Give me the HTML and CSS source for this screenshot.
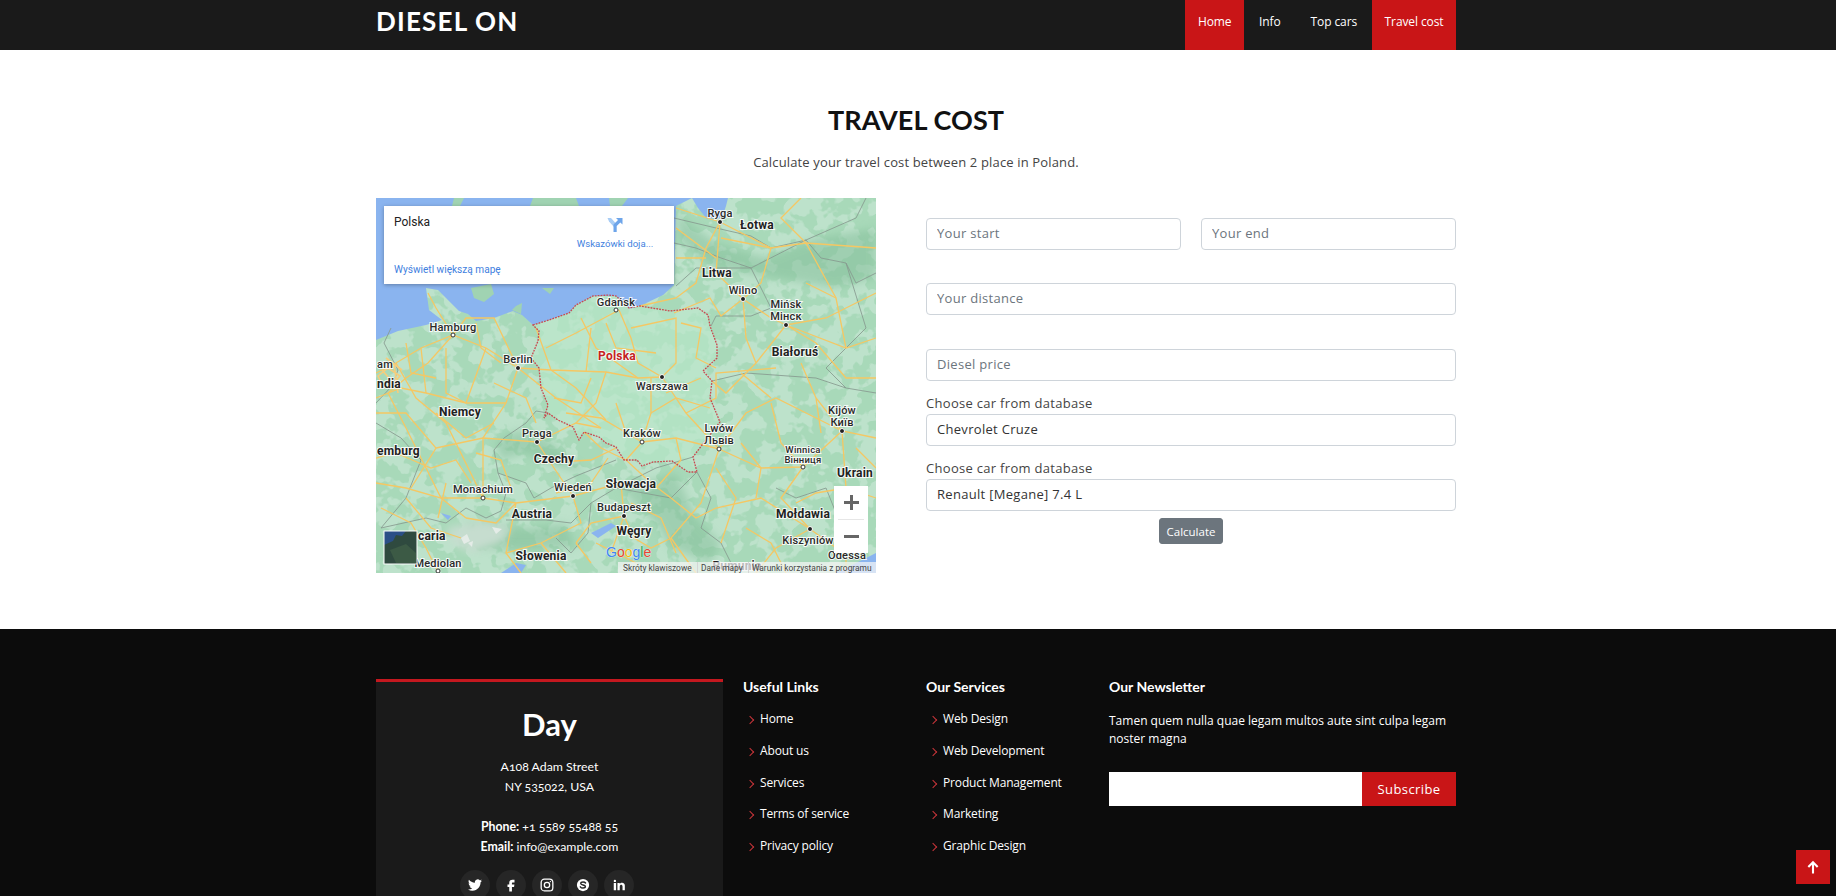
FILE: index.html
```html
<!DOCTYPE html>
<html lang="en">
<head>
  <meta charset="UTF-8">
  <title>Diesel On</title>
  <link rel="stylesheet" href="styles.css">
</head>
<body>

  <header class="topbar">
    <div class="wrap topbar-inner">
      <a class="logo" href="#">DIESEL ON</a>
      <nav class="nav">
        <a class="nav-link active" href="#">Home</a>
        <a class="nav-link" href="#">Info</a>
        <a class="nav-link" href="#">Top cars</a>
        <a class="nav-link active" href="#">Travel cost</a>
      </nav>
    </div>
  </header>

  <section class="travel">
    <div class="wrap">
      <h2 class="section-title">TRAVEL COST</h2>
      <p class="section-sub">Calculate your travel cost between 2 place in Poland.</p>

      <div class="travel-row">
        <div class="map">
          <svg class="map-svg" viewBox="0 0 500 375" width="500" height="375">
            <defs>
              <filter id="woods" x="0" y="0" width="100%" height="100%">
                <feTurbulence type="fractalNoise" baseFrequency=".06" numOctaves="3" seed="11"/>
                <feColorMatrix values="0 0 0 0 .51  0 0 0 0 .76  0 0 0 0 .60  14 0 0 0 -6.6"/>
              </filter>
              <filter id="soft" x="-10%" y="-10%" width="120%" height="120%">
                <feGaussianBlur stdDeviation="4"/>
              </filter>
            </defs>
            <g class="map-geo">
              <rect width="500" height="375" fill="#a8d9b9"/>
              <rect width="500" height="375" filter="url(#woods)"/>
              <!-- mountains and big forest areas -->
              <g fill="#82bd98" filter="url(#soft)" opacity=".5">
                <path d="M245 290L285 280L300 275L320 320L345 345L335 365L295 350L280 325L258 305Z"/>
                <path d="M125 262L150 255L180 268L210 275L195 262L170 240L140 232L120 245Z"/>
                <path d="M300 15L340 45L390 60L440 40L500 30V80L460 90L400 80L340 70L305 45Z"/>
                <path d="M90 325L150 330L190 325L200 350L150 352L100 350Z"/>
              </g>
              <!-- sea -->
              <path fill="#8ab4ef" d="M0 0H352L350 8L346 20L331 21L322 10L316 0L300 8L298 87L287 97L264 108L254 111L240 98L217 98L200 107L193 115L173 122L157 127L146 117L137 113L118 120L100 123L92 116L83 113L70 100L62 92L50 90L53 112L66 122L50 127L22 133L0 142Z"/>
              <path fill="#a0d3b2" d="M78 0H88L84 8H76ZM157 0H200L203 8H154ZM233 0H252L246 8H234ZM95 90L115 86L118 96L108 104L98 100ZM166 90L178 90L174 96ZM140 108L146 105L145 116L136 112Z"/>
              <!-- poland -->
              <path fill="#b9e7ca" fill-opacity=".6" d="M157 127L173 122L193 115L200 107L217 98L240 98L253 110L264 108L294 113L322 110L332 117L334 128L341 147L341 160L327 173L336 183L334 200L344 224L326 247L317 259L321 274L312 274L296 263L277 264L266 268L261 262L248 262L240 249L230 245L223 239L208 234L203 242L197 229L182 222L172 215L168 220L172 207L165 190L163 170L155 160L162 143L163 133Z"/>
              <!-- alps -->
              <path fill="#c6ddcf" filter="url(#soft)" d="M70 330L110 322L135 330L125 345L95 355L75 345Z"/>
              <path fill="#e4ece7" d="M85 340L91 336L94 343L88 346ZM116 329L126 331L120 336ZM92 345L97 343L96 349Z"/>
              <path fill="#8ab4ef" d="M125 375L140 365L150 367L145 375ZM215 335L235 325L240 328L222 340ZM460 375L500 355V375ZM65 315L75 318L72 322Z"/>
              <!-- country borders -->
              <g fill="none" stroke="#86998f" stroke-width=".85">
                <path d="M15 130L8 145L22 172L16 188L0 205M0 225L25 240L45 262L30 300L5 330M5 330L50 320L70 325L90 310L110 320L125 313L130 295L122 275L118 252L128 240L150 225L160 213L172 215"/>
                <path d="M122 275L150 285L158 300L175 290L200 278L240 262M130 322L170 322L195 325L215 305L240 290L280 270L317 259M215 305L212 335L195 355L180 340M240 290L295 300L321 274M321 274L335 300L325 330L345 345L360 375"/>
                <path d="M298 20L340 30L375 38L395 50L430 42L480 20L490 0M298 45L320 50L345 60L375 70L430 42M300 88L320 70L375 70L395 110L375 118L340 118L335 128M430 42L445 60L470 65L480 85L500 75M470 65L490 130L450 170L470 190L500 195M336 183L370 175L440 180L470 190M400 290L420 300L450 290L470 340L480 355"/>
              </g>
              <!-- roads -->
              <g fill="none" stroke="#f5c763" stroke-width="1.3">
                <path d="M0 175L20 165L45 150L77 137L110 150L142 170M77 137L60 110L52 95M77 137L90 120L118 120L142 170M77 137L52 165L30 180L12 195M142 170L130 205L107 240L107 300M20 165L40 200L70 225L107 300"/>
                <path d="M0 200L25 190L50 195L90 205L130 205M0 215L30 215L60 250L35 290M12 195L30 230L50 270L65 300L90 320M60 250L107 240L161 244M107 300L65 300L30 290L0 285M107 300L140 305L197 298M161 244L178 270L197 298M161 244L200 225L225 230"/>
                <path d="M142 170L175 172L230 174L262 180L286 179M286 179L262 165L255 140L243 112M275 180L275 215L266 244M286 179L310 215L343 251M266 244L300 240L343 251M190 215L225 220L266 244M142 170L180 200L225 230M175 172L160 130M175 172L200 190L230 222"/>
                <path d="M205 120L220 150L262 180M255 130L300 120L300 165L286 179M243 112L200 135L170 150M210 174L215 130M230 174L220 205L200 225M275 215L300 200L334 210M310 215L340 200L340 175L400 170M266 244L250 262L275 285M300 240L305 262L280 290"/>
                <path d="M197 298L245 285L248 318L235 355M248 318L258 340L275 350L295 340L325 305L343 251M197 298L205 325L165 345L130 355M248 318L215 325L200 345M275 285L295 300L320 320L340 310L385 300L434 331M343 251L385 270L427 269L466 233"/>
                <path d="M343 251L370 215L400 200L466 233L500 240M427 269L405 300L434 331L470 357L470 375M466 233L470 290L500 300M434 331L400 350L380 375M344 24L330 50L320 85L300 100L264 108M344 24L395 50L430 45L500 50M344 24L300 10M344 24L340 75L367 101"/>
                <path d="M367 101L345 118L334 100L298 115M367 101L395 120L410 127L470 150L500 140M410 127L380 165L350 195L336 183M367 101L370 140L380 165M410 127L440 145L470 180L500 180M470 150L460 100L430 45M430 45L405 20L425 0M410 127L450 120L500 95M300 30L340 60"/>
                <path d="M0 260L35 250M70 150L70 195L90 205M110 150L90 205M45 150L50 195M30 300L55 330L85 340M140 305L130 355L145 375M165 345L190 375M90 320L120 325L140 305M220 345L260 365M295 340L320 375"/>
                <path d="M30 145L35 175L60 180M100 125L105 150L125 165M118 185L150 200L160 225M60 215L90 240L118 225M20 255L55 270L80 262L95 285M70 285L62 320M5 310L35 325L50 350L62 374M100 255L125 262L135 290M165 265L215 262L240 250"/>
                <path d="M178 200L205 205L215 180M230 125L240 150L280 155M305 125L325 130L320 160L340 170M290 195L325 180M240 205L250 235M208 234L225 250L250 262M180 295L215 285L232 260M200 345L215 365M255 305L285 320L300 355M340 270L360 300L345 345"/>
                <path d="M365 245L385 270L380 300M395 205L405 245L427 269M440 200L445 235M365 175L395 200M425 165L440 200L466 233M470 290L440 295L420 305M480 250L500 270M370 330L395 345L410 375M345 40L395 50L385 85L367 101M300 60L330 60M430 85L460 100"/>
              </g>
              <g fill="none" stroke="#f6cd7c" stroke-width="1.6">
                <path d="M2 178L12 170L24 178L14 190L6 186ZM6 172L20 188M18 166L22 195M10 160L26 172"/>
              </g>
            </g>
            <!-- poland border -->
            <path fill="none" stroke="#c9484f" stroke-width="1.3" stroke-dasharray="1.8 1.1" d="M157 127L173 122L193 115L200 107L217 98L233 97L240 98L253 110L264 108L294 113L322 110L332 117L334 128L341 147L341 160L327 173L336 183L334 200L344 224L326 247L317 259L321 274L312 274L296 263L277 264L266 268L261 262L248 262L240 249L230 245L223 239L208 234L203 242L197 229L182 222L172 215L168 220L172 207L165 190L163 170L155 160L162 143L163 133Z"/>

            <g class="map-dots">
              <circle cx="344" cy="24" r="2.5"/><circle cx="367" cy="101" r="2.5"/><circle cx="410" cy="127" r="2.5"/>
              <circle cx="142" cy="170" r="2.5"/><circle cx="286" cy="179" r="2.5"/><circle cx="161" cy="244" r="2.5"/>
              <circle cx="197" cy="298" r="2.5"/><circle cx="248" cy="318" r="2.5"/><circle cx="466" cy="233" r="2.5"/>
              <circle cx="434" cy="331" r="2.5"/>
            </g>
            <g class="map-dots-open">
              <circle cx="240" cy="112" r="2"/><circle cx="77" cy="137" r="2"/><circle cx="107" cy="300" r="2"/>
              <circle cx="266" cy="244" r="2"/><circle cx="343" cy="251" r="2"/><circle cx="427" cy="269" r="2"/>
              <circle cx="62" cy="373" r="2"/>
            </g>

            <g class="map-labels">
              <text x="344" y="19">Ryga</text>
              <text x="367" y="96">Wilno</text>
              <text x="410" y="110">Mińsk</text>
              <text x="410" y="122">Мінск</text>
              <text x="240" y="108">Gdańsk</text>
              <text x="77" y="133">Hamburg</text>
              <text x="142" y="165">Berlin</text>
              <text x="286" y="192">Warszawa</text>
              <text x="161" y="239">Praga</text>
              <text x="107" y="295">Monachium</text>
              <text x="197" y="293">Wiedeń</text>
              <text x="248" y="313">Budapeszt</text>
              <text x="62" y="369">Mediolan</text>
              <text x="266" y="239">Kraków</text>
              <text x="343" y="234">Lwów</text>
              <text x="343" y="246">Львів</text>
              <text x="466" y="216">Kijów</text>
              <text x="466" y="228">Київ</text>
              <text x="432" y="346">Kiszyniów</text>
              <text x="471" y="361">Odessa</text>
              <text class="label-start" x="1" y="170">am</text>
              <text class="label-small" x="427" y="255">Winnica</text>
              <text class="label-small" x="427" y="265">Вінниця</text>
            </g>
            <g class="map-labels map-labels-bold">
              <text x="381" y="31">Łotwa</text>
              <text x="341" y="79">Litwa</text>
              <text x="419" y="158">Białoruś</text>
              <text x="84" y="218">Niemcy</text>
              <text x="178" y="265">Czechy</text>
              <text x="255" y="290">Słowacja</text>
              <text x="156" y="320">Austria</text>
              <text x="258" y="337">Węgry</text>
              <text x="165" y="362">Słowenia</text>
              <text x="427" y="320">Mołdawia</text>
              <text x="361" y="372">Rumunia</text>
              <text class="label-start" x="1" y="190">ndia</text>
              <text class="label-start" x="1" y="257">emburg</text>
              <text class="label-start" x="42" y="342">caria</text>
              <text class="label-start" x="461" y="279">Ukrain</text>
              <text class="label-red" x="241" y="162">Polska</text>
            </g>

            <text class="google" x="230" y="359"><tspan fill="#4285f4">G</tspan><tspan fill="#ea4335">o</tspan><tspan fill="#fbbc05">o</tspan><tspan fill="#4285f4">g</tspan><tspan fill="#34a853">l</tspan><tspan fill="#ea4335">e</tspan></text>

            <!-- satellite thumbnail -->
            <g>
              <rect x="8" y="333" width="33" height="33" fill="#2f4a3f"/>
              <path fill="#2b4f86" d="M8 333H30L26 338L20 337L17 343L8 347Z"/>
              <path fill="#3c5a45" d="M14 352L30 346L40 355L40 365L20 365Z"/>
              <rect x="8" y="333" width="33" height="33" fill="none" stroke="#fff" stroke-width="1"/>
            </g>

            <!-- attribution -->
            <rect x="242" y="364" width="258" height="11" fill="#f5f5f5" fill-opacity=".72"/>
            <path d="M321.5 364V375M372.5 364V375" stroke="#d5d5d5" stroke-width="1"/>
            <g class="map-attrib">
              <text x="247" y="372.5">Skróty klawiszowe</text>
              <text x="325" y="372.5">Dane mapy</text>
              <text x="376" y="372.5">Warunki korzystania z programu</text>
            </g>
          </svg>

          <div class="map-card">
            <div class="map-place">Polska</div>
            <a class="map-directions" href="#">
              <svg class="directions-icon" viewBox="0 0 18 18" width="18" height="18">
                <path d="M1.5 3L5 3L9.5 8L8 12L3 6.5Z" fill="#a9cdf5"/>
                <path d="M7.5 17V9.5L12 5L10 3H16.5V9.5L14.3 7.5L10.7 11V17Z" fill="#6ea5ea"/>
              </svg>
              <span>Wskazówki doja...</span>
            </a>
            <a class="map-larger" href="#">Wyświetl większą mapę</a>
          </div>

          <div class="map-zoom">
            <button class="zoom-btn" type="button"><span class="zoom-plus"></span></button>
            <span class="zoom-sep"></span>
            <button class="zoom-btn" type="button"><span class="zoom-minus"></span></button>
          </div>
        </div>

        <form class="cost-form">
          <div class="form-row form-row-split">
            <input class="field" type="text" placeholder="Your start">
            <input class="field" type="text" placeholder="Your end">
          </div>
          <div class="form-row form-row-distance">
            <input class="field" type="text" placeholder="Your distance">
          </div>
          <div class="form-row form-row-tight">
            <input class="field" type="text" placeholder="Diesel price">
          </div>
          <label class="field-label">Choose car from database</label>
          <div class="field field-select">Chevrolet Cruze</div>
          <label class="field-label">Choose car from database</label>
          <div class="field field-select">Renault [Megane] 7.4 L</div>
          <div class="form-submit">
            <button class="btn-calc" type="button">Calculate</button>
          </div>
        </form>
      </div>
    </div>
  </section>

  <footer class="footer">
    <div class="wrap footer-grid">
      <div class="footer-info">
        <h3 class="footer-brand">Day</h3>
        <p class="footer-address">A108 Adam Street<br>NY 535022, USA</p>
        <p class="footer-contact"><strong>Phone:</strong> +1 5589 55488 55<br><strong>Email:</strong> info@example.com</p>
        <div class="social">
          <a class="social-link" href="#">
            <svg viewBox="0 0 24 24" width="14" height="14"><path fill="#fff" d="M23.953 4.57a10 10 0 01-2.825.775 4.958 4.958 0 002.163-2.723c-.951.555-2.005.959-3.127 1.184a4.92 4.92 0 00-8.384 4.482C7.69 8.095 4.067 6.13 1.64 3.162a4.822 4.822 0 00-.666 2.475c0 1.71.87 3.213 2.188 4.096a4.904 4.904 0 01-2.228-.616v.06a4.923 4.923 0 003.946 4.827 4.996 4.996 0 01-2.212.085 4.936 4.936 0 004.604 3.417 9.867 9.867 0 01-6.102 2.105c-.39 0-.779-.023-1.17-.067a13.995 13.995 0 007.557 2.209c9.053 0 13.998-7.496 13.998-13.985 0-.21 0-.42-.015-.63A9.935 9.935 0 0024 4.59z"/></svg>
          </a>
          <a class="social-link" href="#">
            <svg viewBox="0 0 24 24" width="14" height="14"><path fill="#fff" d="M14.6 7.5H18V3h-3.6C10.9 3 9 5.2 9 8.2V11H6v4.3h3V23h4.6v-7.7h3.6l.7-4.3h-4.3V8.8c0-.9.3-1.3 1-1.3z"/></svg>
          </a>
          <a class="social-link" href="#">
            <svg viewBox="0 0 24 24" width="14" height="14" fill="none" stroke="#fff" stroke-width="2.2"><rect x="2" y="2" width="20" height="20" rx="5.5"/><circle cx="12" cy="12" r="4.6"/><circle cx="17.8" cy="6.2" r="1.2" fill="#fff" stroke="none"/></svg>
          </a>
          <a class="social-link" href="#">
            <svg viewBox="0 0 24 24" width="14" height="14"><circle cx="12" cy="12" r="10.5" fill="#fff"/><path fill="none" stroke="#262626" stroke-width="2.4" stroke-linecap="round" d="M16.4 8.6C15.4 7.2 13.8 6.8 12 6.8c-2.2 0-3.9 1-3.9 2.6 0 3.6 8 1.6 8 5.2 0 1.6-1.8 2.6-4.1 2.6-2 0-3.6-.6-4.6-2.1"/></svg>
          </a>
          <a class="social-link" href="#">
            <svg viewBox="0 0 24 24" width="14" height="14"><path fill="#fff" d="M6.94 5a2 2 0 11-4-.002 2 2 0 014 .002zM7 8.48H3V21h4V8.48zm6.32 0H9.34V21h3.94v-6.57c0-3.66 4.77-4 4.77 0V21H22v-7.93c0-6.17-7.06-5.94-8.72-2.91l.04-1.68z"/></svg>
          </a>
        </div>
      </div>

      <div class="footer-col">
        <h4 class="footer-heading">Useful Links</h4>
        <ul class="footer-links">
          <li><a href="#">Home</a></li>
          <li><a href="#">About us</a></li>
          <li><a href="#">Services</a></li>
          <li><a href="#">Terms of service</a></li>
          <li><a href="#">Privacy policy</a></li>
        </ul>
      </div>

      <div class="footer-col">
        <h4 class="footer-heading">Our Services</h4>
        <ul class="footer-links">
          <li><a href="#">Web Design</a></li>
          <li><a href="#">Web Development</a></li>
          <li><a href="#">Product Management</a></li>
          <li><a href="#">Marketing</a></li>
          <li><a href="#">Graphic Design</a></li>
        </ul>
      </div>

      <div class="footer-col">
        <h4 class="footer-heading">Our Newsletter</h4>
        <p class="footer-text">Tamen quem nulla quae legam multos aute sint culpa legam noster magna</p>
        <form class="subscribe">
          <input class="subscribe-input" type="email">
          <button class="subscribe-btn" type="button">Subscribe</button>
        </form>
      </div>
    </div>
  </footer>

  <a class="back-top" href="#">
    <svg viewBox="0 0 12 12" width="14" height="14"><path fill="none" stroke="#fff" stroke-width="1.8" d="M6 11.5V2M2 6L6 2L10 6"/></svg>
  </a>

</body>
</html>
```

FILE: styles.css
```css
* {
  box-sizing: border-box;
}

html, body {
  height: 896px;
  overflow: hidden;
}

body {
  margin: 0;
  font-family: "Open Sans", sans-serif;
  color: #444;
  background: #fff;
}

a {
  text-decoration: none;
  color: inherit;
}

.wrap {
  width: 1080px;
  margin: 0 auto;
}

/* header */
.topbar {
  height: 50px;
  padding-right: 4px;
  background: #1a1a1a;
}

.topbar-inner {
  display: flex;
  justify-content: space-between;
  align-items: stretch;
  height: 50px;
}

.logo {
  font-family: Lato, sans-serif;
  font-size: 26px;
  font-weight: 700;
  line-height: 43px;
  letter-spacing: 1.2px;
  color: #fff;
}

.nav {
  display: flex;
}

.nav-link {
  padding: 0 15px;
  font-size: 12px;
  letter-spacing: -.1px;
  line-height: 44px;
  color: #fff;
}

.nav-link.active {
  padding: 0 12.5px;
  background: #c91517;
}

/* travel cost */
.travel {
  height: 579px;
  padding: 54px 4px 0 0;
}

.section-title {
  margin: 0;
  font-family: Lato, sans-serif;
  font-size: 27px;
  font-weight: 700;
  letter-spacing: .1px;
  line-height: 32px;
  text-align: center;
  color: #111;
}

.section-sub {
  margin: 15px 0 25px;
  font-size: 13px;
  letter-spacing: .15px;
  line-height: 22px;
  text-align: center;
  color: #444;
}

.travel-row {
  display: grid;
  grid-template-columns: 500px 530px;
  column-gap: 50px;
}

/* map */
.map {
  position: relative;
  width: 500px;
  height: 375px;
  overflow: hidden;
}

.map-svg {
  display: block;
}

.map-geo {
  filter: blur(.4px);
}

.map-dots circle {
  fill: #222;
  stroke: #fff;
  stroke-width: 1;
}

.map-dots-open circle {
  fill: #fff;
  stroke: #333;
  stroke-width: 1;
}

.map-labels text {
  font-family: Roboto, sans-serif;
  font-size: 11px;
  font-weight: 500;
  letter-spacing: .2px;
  text-anchor: middle;
  fill: #2a2a2a;
  stroke: #fff;
  stroke-width: 2px;
  stroke-opacity: .85;
  paint-order: stroke;
}

.map-labels .label-start {
  text-anchor: start;
}

.map-labels .label-small {
  font-size: 9.5px;
}

.map-labels-bold text {
  font-size: 12px;
  font-weight: 700;
  fill: #222;
}

.map-labels .label-red {
  fill: #c5221f;
}

.google {
  font-family: "Liberation Sans", sans-serif;
  font-size: 14px;
  stroke: #fff;
  stroke-width: .6px;
  stroke-opacity: .7;
  paint-order: stroke;
}

.map-attrib text {
  font-family: Roboto, sans-serif;
  font-size: 8.4px;
  fill: #444;
}

.map-card {
  position: absolute;
  left: 8px;
  top: 8px;
  width: 290px;
  height: 78px;
  background: #fff;
  box-shadow: 0 1px 4px rgba(0, 0, 0, .3);
  font-family: Roboto, sans-serif;
}

.map-place {
  position: absolute;
  left: 10px;
  top: 8px;
  font-size: 12px;
  line-height: 16px;
  color: #222;
}

.map-directions {
  position: absolute;
  left: 191px;
  top: 9px;
  width: 80px;
  display: flex;
  flex-direction: column;
  align-items: center;
  font-size: 9.6px;
  line-height: 12px;
  color: #3f7fe0;
}

.directions-icon {
  margin-bottom: 5px;
}

.map-larger {
  position: absolute;
  left: 10px;
  top: 57px;
  font-size: 10.1px;
  line-height: 13px;
  color: #3f7fe0;
}

.map-zoom {
  position: absolute;
  left: 458px;
  top: 288px;
  width: 34px;
  height: 67px;
  display: flex;
  flex-direction: column;
  align-items: center;
  background: #fff;
}

.zoom-btn {
  display: flex;
  align-items: center;
  justify-content: center;
  width: 34px;
  height: 33px;
  padding: 0;
  border: none;
  background: none;
}

.zoom-sep {
  width: 26px;
  height: 1px;
  background: #e6e6e6;
}

.zoom-plus,
.zoom-minus {
  position: relative;
  display: block;
  width: 15px;
  height: 3px;
  background: #666;
}

.zoom-plus::after {
  content: "";
  position: absolute;
  left: 6px;
  top: -6px;
  width: 3px;
  height: 15px;
  background: #666;
}

/* form */
.cost-form {
  padding-top: 20px;
}

.form-row {
  margin-bottom: 33px;
}

.form-row-split {
  display: grid;
  grid-template-columns: 255px 255px;
  column-gap: 20px;
}

.form-row-distance {
  margin-bottom: 34px;
}

.form-row-tight {
  margin-bottom: 11px;
}

.field {
  display: block;
  width: 100%;
  height: 32px;
  padding: 0 10px 2px;
  border: 1px solid #ced4da;
  border-radius: 4px;
  background: #fff;
  font-family: "Open Sans", sans-serif;
  font-size: 13px;
  letter-spacing: .3px;
  color: #333;
  outline: none;
}

.field::placeholder {
  color: #6c757d;
  opacity: 1;
}

.field-select {
  line-height: 29px;
  margin-bottom: 11px;
}

.field-label {
  display: block;
  height: 22px;
  font-size: 13px;
  letter-spacing: .3px;
  line-height: 22px;
  color: #444;
}

.form-submit {
  display: flex;
  justify-content: center;
  margin-top: -4px;
}

.btn-calc {
  width: 64px;
  height: 26px;
  padding: 0;
  border: 1px solid #6c757d;
  border-radius: 3px;
  background: #6c757d;
  font-family: "Open Sans", sans-serif;
  font-size: 11.5px;
  color: #fff;
}

/* footer */
.footer {
  height: 267px;
  padding: 50px 4px 0 0;
  overflow: hidden;
  background: #0c0c0c;
  color: #fff;
}

.footer-grid {
  display: grid;
  grid-template-columns: 347px 163px 163px 347px;
  column-gap: 20px;
}

.footer-info {
  height: 240px;
  border-top: 3px solid #c4181f;
  background: #1a1a1a;
  text-align: center;
  font-family: Lato, sans-serif;
}

.footer-brand {
  margin: 25px 0 16px;
  font-size: 31px;
  font-weight: 700;
  line-height: 34px;
}

.footer-address,
.footer-contact {
  margin: 0 0 20px;
  font-size: 12.3px;
  line-height: 20px;
  font-variant-numeric: oldstyle-nums;
}

.footer-contact {
  margin-bottom: 13px;
}

.social {
  display: flex;
  justify-content: center;
  gap: 6px;
  padding-right: 5px;
}

.social-link {
  display: flex;
  align-items: center;
  justify-content: center;
  width: 30px;
  height: 30px;
  border-radius: 50%;
  background: #262626;
}

.footer-heading {
  margin: 0 0 8px;
  font-family: Lato, sans-serif;
  font-size: 14px;
  font-weight: 700;
  line-height: 16px;
}

.footer-links {
  margin: 0;
  padding: 0;
  list-style: none;
}

.footer-links li {
  position: relative;
  height: 31.75px;
  padding-left: 17px;
  font-size: 12px;
  letter-spacing: -.15px;
  line-height: 32px;
}

.footer-links li::before {
  content: "";
  position: absolute;
  left: 4px;
  top: 14px;
  width: 5px;
  height: 5px;
  border-top: 1.5px solid #c9353a;
  border-right: 1.5px solid #c9353a;
  transform: rotate(45deg);
}

.footer-text {
  margin: 17px 0 25px;
  font-size: 12px;
  line-height: 17.5px;
}

.subscribe {
  display: flex;
  height: 34px;
}

.subscribe-input {
  flex: 1;
  min-width: 0;
  border: none;
  background: #fff;
}

.subscribe-btn {
  width: 94px;
  border: none;
  background: #c91517;
  font-family: "Open Sans", sans-serif;
  font-size: 13px;
  letter-spacing: .4px;
  color: #fff;
}

.back-top {
  position: fixed;
  left: 1796px;
  top: 850px;
  display: flex;
  align-items: center;
  justify-content: center;
  width: 34px;
  height: 34px;
  background: #c91517;
}
```
